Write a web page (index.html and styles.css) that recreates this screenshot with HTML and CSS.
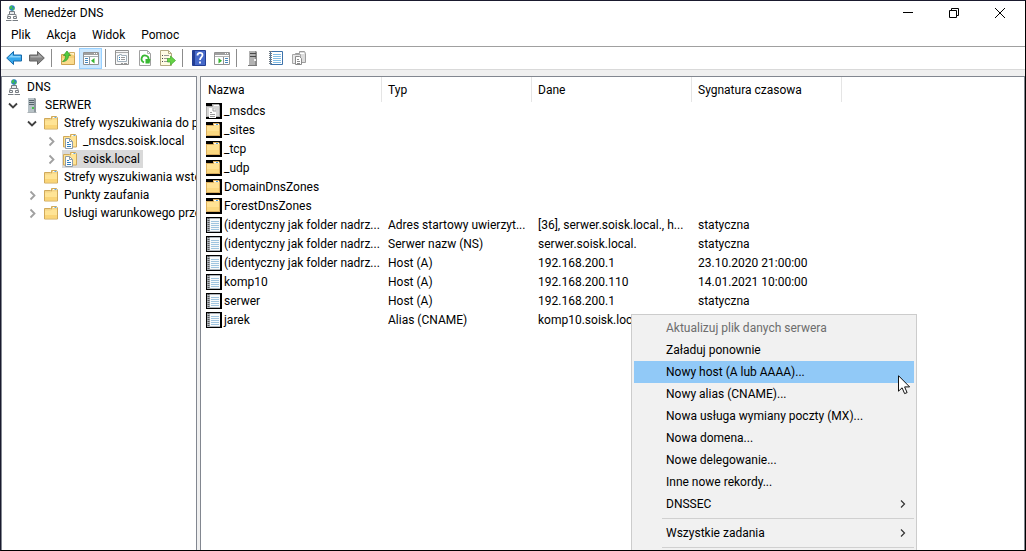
FILE: index.html
```
<!DOCTYPE html>
<html lang="pl">
<head>
  <meta charset="UTF-8">
  <meta name="viewport" content="width=device-width, initial-scale=1">
  <title>Menedżer DNS</title>
  <link rel="stylesheet" href="styles.css">
</head>
<body>

<!-- Ikony -->
<svg class="sprite" aria-hidden="true">
  <symbol id="i-dns" viewBox="0 0 16 16">
    <path d="M8 5v5M4 11v-1.500h8V11" fill="none" stroke="#8b8f94"/>
    <path d="M5.500 6.500h5v3h-5z" fill="#e8eaec" stroke="#777c82"/>
    <path d="M3.500 11.500h3v2h-3zM9.500 11.500h3v2h-3z" fill="#eef0f1" stroke="#777c82"/>
    <path d="M2 15.500h5.500M8.500 15.500H14" stroke="#777c82"/>
    <circle cx="8" cy="3" r="2.800" fill="#2d7fc4"/>
    <path d="M6 1.500l2-1 .5 2-1.500 2-1.500-1zM9 3l1.500-.5-.5 2.500-1.500.5z" fill="#3fc04b"/>
  </symbol>
  <symbol id="i-server" viewBox="0 0 16 16">
    <path d="M4 1h7l1 1v13H4z" fill="#8c969c"/>
    <path d="M4 1h6v14H4z" fill="#b7c1c6"/>
    <path d="M5 3.500h5M5 5.500h5M5 7.500h5" stroke="#56636b"/>
    <path d="M3.500 15.500h9" stroke="#aab1b5"/>
    <rect x="8" y="10" width="2" height="2" fill="#45c24c"/>
  </symbol>
  <symbol id="i-server-gray" viewBox="0 0 16 16">
    <path d="M4 1h7l1 1v13H4z" fill="#8a8a8a"/>
    <path d="M4 1h6v14H4z" fill="#b2b2b2"/>
    <path d="M5 3.500h6M5 6.500h6" stroke="#494949"/>
    <path d="M3 15.500h9" stroke="#777"/>
    <rect x="9" y="9" width="2" height="2" fill="#eee"/>
  </symbol>
  <symbol id="i-folder" viewBox="0 0 16 16">
    <path d="M8.500 4V1.500h5l1 1.500v11h-13V3.500h6z" fill="#f3d588" stroke="#d0a95a"/>
    <path d="M10 2.500h4" stroke="#fff"/>
    <path d="M11.500 2.500h2" stroke="#65a9dc"/>
    <path d="M2 5.500h6l1-1h5V13H2z" fill="#ffe495"/>
    <path d="M2 10h12v3.500H2z" fill="#fad578"/>
  </symbol>
  <symbol id="i-zone" viewBox="0 0 16 16">
    <path d="M8.500 4V1.500h5l1 1.500v11h-13V3.500h6z" fill="#ffe495" stroke="#d0a95a"/>
    <path d="M10 2.500h4" stroke="#fff"/>
    <path d="M11.500 2.500h2" stroke="#65a9dc"/>
    <path d="M3.500 5.500h4l3 3v7h-7z" fill="#fff" stroke="#8d9ba8"/>
    <path d="M7.500 5.500v3h3" fill="none" stroke="#8d9ba8"/>
    <path d="M5 9.500h2M5 11.500h4M5 13.500h4" stroke="#2f7fc0"/>
  </symbol>
  <symbol id="i-folder-dark" viewBox="0 0 16 16">
    <path d="M0 0h16v16H0z"/>
    <path d="M0 3h7V1h6l1 2v11H0z" fill="#d9ad5e"/>
    <path d="M1 4h7V2h5v11H1z" fill="#ffe294"/>
    <path d="M1 9h12v4H1z" fill="#fbd880"/>
    <path d="M8 2.500h5" stroke="#fff"/>
    <path d="M10 2.500h2" stroke="#4b9ddd"/>
  </symbol>
  <symbol id="i-delegation" viewBox="0 0 16 16">
    <path d="M0 0h16v16H0z"/>
    <path d="M0 3h6V1h7l1 2v11H0z" fill="#aaa"/>
    <path d="M1 4h6V2h6v11H1z" fill="#d5d5d5"/>
    <path d="M8 2.500h5" stroke="#fff"/>
    <path d="M3 5h4l3 3v7H3z" fill="#fff"/>
    <path d="M7 5v3h3M4 9.500h2M4 11.500h5M4 13.500h5" fill="none" stroke="#999"/>
  </symbol>
  <symbol id="i-record" viewBox="0 0 16 16">
    <path d="M0 0h16v16H0z"/>
    <path d="M1 1h13v14H1z" fill="#aeb5bc"/>
    <path d="M4 2h10v12H4z" fill="#f8fafb"/>
    <path d="M2.500 1v14" stroke="#555" stroke-dasharray="1 1" stroke-width="2"/>
    <path d="M5 4.500h8M5 6.500h8M5 8.500h8M5 10.500h8M5 12.500h8" stroke="#9fc4df"/>
  </symbol>
  <symbol id="i-back" viewBox="0 0 16 16">
    <path d="M.7 8L7.500 1.500V5h8v6h-8v3.500z" fill="#35a7ec" stroke="#1769aa"/>
    <path d="M2.500 7.500L6.500 3.700V6h8v1.500z" fill="#8ad3fa"/>
  </symbol>
  <symbol id="i-forward" viewBox="0 0 16 16">
    <path d="M15.300 8L8.500 1.500V5h-8v6h8v3.500z" fill="#858585" stroke="#626262"/>
    <path d="M13.500 7.500L9.500 3.700V6h-8v1.500z" fill="#adadad"/>
  </symbol>
  <symbol id="i-up" viewBox="0 0 16 16">
    <path d="M1.500 4.500h6l1-1h6v11h-13z" fill="#f5cf76" stroke="#cda252"/>
    <path d="M9.500 3.500V2.500h5v3" fill="#fff2c9" stroke="#d3ae64"/>
    <path d="M2 8h12v6H2z" fill="#fbdb8c"/>
    <path d="M2.500 11.500C5 10.500 5.500 8 5.500 5.500H3.500L7 1l3.500 4.500H8.500C8.500 9 6.500 11.500 2.500 11.500z" fill="#52cc3e" stroke="#30942b" stroke-width=".7"/>
  </symbol>
  <symbol id="i-tree" viewBox="0 0 16 16">
    <path d="M.5 2.500h15v12H.5z" fill="#fff" stroke="#929292"/>
    <path d="M1 3h14v2H1z" fill="#a0a0a0"/>
    <path d="M1 6.500h14" stroke="#a6adb3"/>
    <path d="M11 3.500h1M13 3.500h1" stroke="#fff"/>
    <path d="M6.500 7v7" stroke="#8d969e"/>
    <path d="M2 8.500h3M2 10.500h3M2 12.500h3" stroke="#4587bd"/>
    <path d="M11.500 8v5.500L8 10.700z" fill="#35b52e"/>
  </symbol>
  <symbol id="i-action" viewBox="0 0 16 16">
    <path d="M.5 2.500h15v12H.5z" fill="#fff" stroke="#929292"/>
    <path d="M1 3h14v2H1z" fill="#a0a0a0"/>
    <path d="M1 6.500h14" stroke="#b2b2b2"/>
    <path d="M11 3.500h1M13 3.500h1" stroke="#fff"/>
    <path d="M9.500 7v7" stroke="#929292"/>
    <path d="M11 8.500h3M11 10.500h3M11 12.500h3" stroke="#4587bd"/>
    <path d="M4.500 8v5.500L8 10.700z" fill="#35b52e"/>
  </symbol>
  <symbol id="i-props" viewBox="0 0 16 16">
    <path d="M1.500.5h13v14h-13z" fill="#f7f7f7" stroke="#919191"/>
    <path d="M2 2.500h12" stroke="#aaa"/>
    <path d="M3.500 5.500h2v-1h2v1h5v6h-9z" fill="#fff" stroke="#a2b0bb"/>
    <path d="M5 7.500h1M5 9.500h1" stroke="#287fc0"/>
    <path d="M7 7.500h4M7 9.500h4" stroke="#999"/>
    <path d="M7 13.500h2M10 13.500h3" stroke="#999"/>
  </symbol>
  <symbol id="i-refresh" viewBox="0 0 16 16">
    <path d="M2.500.5h8l3 3v12h-11z" fill="#fff" stroke="#a0a0a0"/>
    <path d="M10.500.5v3h3" fill="none" stroke="#b0b0b0"/>
    <path d="M7 12.300A3.500 3.500 0 1 1 11.500 9.500" fill="none" stroke="#39b832" stroke-width="1.800"/>
    <path d="M8.500 9h5l-1 4.500h-4z" fill="#39b832"/>
  </symbol>
  <symbol id="i-export" viewBox="0 0 16 16">
    <path d="M.5.5h8l3 3v12H.5z" fill="#fffbe3" stroke="#b5aa83"/>
    <path d="M8.500.5v3h3" fill="none" stroke="#b5aa83"/>
    <path d="M2 5.500h1M2 8.500h1M2 11.500h1" stroke="#444"/>
    <path d="M4 5.500h5M4 8.500h4M4 11.500h4" stroke="#999"/>
    <path d="M7.500 8.500h3V6L15.500 10.500 10.500 15v-3h-3z" fill="#66d345" stroke="#3ca82d" stroke-width=".7"/>
  </symbol>
  <symbol id="i-help" viewBox="0 0 16 16">
    <path d="M1.500.5h13v15h-13z" fill="#4669c9" stroke="#233e94"/>
    <path d="M2 1h2v14H2z" fill="#233e94"/>
    <path d="M6.500 5.500c0-3.500 5-3.500 5-.5 0 2-2.500 2.200-2.500 5M9 11.500v2" fill="none" stroke="#fff" stroke-width="1.800"/>
  </symbol>
  <symbol id="i-notebook" viewBox="0 0 16 16">
    <path d="M2.500 1.500h12v13h-12z" fill="#fff" stroke="#3c72ab"/>
    <path d="M5 4.500h8M5 6.500h8M5 8.500h8M5 10.500h8M5 12.500h8" stroke="#82bde5"/>
    <path d="M2.500 1v14" stroke="#707b84" stroke-width="3" stroke-dasharray="1 1"/>
  </symbol>
  <symbol id="i-filter" viewBox="0 0 16 16">
    <path d="M4.500 3.500h4v-2h5l1 2v9h-10z" fill="#ddd" stroke="#9d9d9d"/>
    <path d="M9 3.500h4" stroke="#fff"/>
    <path d="M1.500 4.500h8v9h-8z" fill="#e8e8e8" stroke="#a7a7a7"/>
    <path d="M4.500 6.500h4l2 2v6h-6z" fill="#fff" stroke="#8b8b8b"/>
    <path d="M6 9.500h2M6 11.500h3M6 13.500h3" stroke="#8b8b8b"/>
  </symbol>
  <symbol id="i-open" viewBox="0 0 16 16">
    <path d="M4 6.500l4 4 4-4" fill="none" stroke="#404040" stroke-width="1.800"/>
  </symbol>
  <symbol id="i-closed" viewBox="0 0 16 16">
    <path d="M6.500 4.500l4 4-4 4" fill="none" stroke="#a0a0a0" stroke-width="1.800"/>
  </symbol>
  <symbol id="i-more" viewBox="0 0 16 16">
    <path d="M6 4.500L9.500 8 6 11.500" fill="none" stroke="#333" stroke-width="1.200"/>
  </symbol>
</svg>

<div class="window">
  <header class="titlebar">
    <svg class="icon"><use href="#i-dns"/></svg>
    <h1>Menedżer DNS</h1>
    <div class="window-buttons">
      <button aria-label="Minimalizuj"><svg viewBox="0 0 10 10"><path d="M0 4.500h10"/></svg></button>
      <button aria-label="Przywróć"><svg viewBox="0 0 10 10"><path d="M.5 2.500h7v7h-7zM2.500 2.500v-2h7v7h-2"/></svg></button>
      <button aria-label="Zamknij"><svg viewBox="0 0 10 10"><path d="M0 0l10 10M10 0L0 10"/></svg></button>
    </div>
  </header>

  <nav class="menubar">
    <button>Plik</button>
    <button>Akcja</button>
    <button>Widok</button>
    <button>Pomoc</button>
  </nav>

  <div class="toolbar">
    <button aria-label="Wstecz"><svg class="icon"><use href="#i-back"/></svg></button>
    <button aria-label="Dalej"><svg class="icon"><use href="#i-forward"/></svg></button>
    <span class="divider"></span>
    <button aria-label="Do góry"><svg class="icon"><use href="#i-up"/></svg></button>
    <button class="active" aria-label="Drzewo konsoli"><svg class="icon"><use href="#i-tree"/></svg></button>
    <span class="divider"></span>
    <button aria-label="Właściwości"><svg class="icon"><use href="#i-props"/></svg></button>
    <button aria-label="Odśwież"><svg class="icon"><use href="#i-refresh"/></svg></button>
    <button aria-label="Eksportuj listę"><svg class="icon"><use href="#i-export"/></svg></button>
    <span class="divider"></span>
    <button aria-label="Pomoc"><svg class="icon"><use href="#i-help"/></svg></button>
    <button aria-label="Okienko akcji"><svg class="icon"><use href="#i-action"/></svg></button>
    <span class="divider"></span>
    <button aria-label="Nowy serwer"><svg class="icon"><use href="#i-server-gray"/></svg></button>
    <button aria-label="Nowy rekord"><svg class="icon"><use href="#i-notebook"/></svg></button>
    <button aria-label="Nowa strefa"><svg class="icon"><use href="#i-filter"/></svg></button>
  </div>

  <main class="panes">
    <!-- Drzewo konsoli -->
    <section class="tree">
      <div class="node root"><svg class="icon"><use href="#i-dns"/></svg><span class="label">DNS</span></div>
      <ul>
        <li>
          <div class="node">
            <button class="toggle" aria-label="Zwiń"><svg class="icon"><use href="#i-open"/></svg></button>
            <svg class="icon"><use href="#i-server"/></svg><span class="label">SERWER</span>
          </div>
          <ul>
            <li>
              <div class="node">
                <button class="toggle" aria-label="Zwiń"><svg class="icon"><use href="#i-open"/></svg></button>
                <svg class="icon"><use href="#i-folder"/></svg><span class="label">Strefy wyszukiwania do przodu</span>
              </div>
              <ul>
                <li class="node">
                  <button class="toggle" aria-label="Rozwiń"><svg class="icon"><use href="#i-closed"/></svg></button>
                  <svg class="icon"><use href="#i-zone"/></svg><span class="label">_msdcs.soisk.local</span>
                </li>
                <li class="node">
                  <button class="toggle" aria-label="Rozwiń"><svg class="icon"><use href="#i-closed"/></svg></button>
                  <span class="selected"><svg class="icon"><use href="#i-zone"/></svg><span class="label">soisk.local</span></span>
                </li>
              </ul>
            </li>
            <li class="node">
              <span class="toggle"></span>
              <svg class="icon"><use href="#i-folder"/></svg><span class="label">Strefy wyszukiwania wstecznego</span>
            </li>
            <li class="node">
              <button class="toggle" aria-label="Rozwiń"><svg class="icon"><use href="#i-closed"/></svg></button>
              <svg class="icon"><use href="#i-folder"/></svg><span class="label">Punkty zaufania</span>
            </li>
            <li class="node">
              <button class="toggle" aria-label="Rozwiń"><svg class="icon"><use href="#i-closed"/></svg></button>
              <svg class="icon"><use href="#i-folder"/></svg><span class="label">Usługi warunkowego przesyłania</span>
            </li>
          </ul>
        </li>
      </ul>
    </section>

    <!-- Lista rekordów -->
    <section class="records">
      <table>
        <colgroup>
          <col class="col-name"><col class="col-type"><col class="col-data"><col class="col-time"><col>
        </colgroup>
        <thead>
          <tr><th>Nazwa</th><th>Typ</th><th>Dane</th><th>Sygnatura czasowa</th><td></td></tr>
        </thead>
        <tbody>
          <tr><td><svg class="icon"><use href="#i-delegation"/></svg>_msdcs</td><td></td><td></td><td></td></tr>
          <tr><td><svg class="icon"><use href="#i-folder-dark"/></svg>_sites</td><td></td><td></td><td></td></tr>
          <tr><td><svg class="icon"><use href="#i-folder-dark"/></svg>_tcp</td><td></td><td></td><td></td></tr>
          <tr><td><svg class="icon"><use href="#i-folder-dark"/></svg>_udp</td><td></td><td></td><td></td></tr>
          <tr><td><svg class="icon"><use href="#i-folder-dark"/></svg>DomainDnsZones</td><td></td><td></td><td></td></tr>
          <tr><td><svg class="icon"><use href="#i-folder-dark"/></svg>ForestDnsZones</td><td></td><td></td><td></td></tr>
          <tr><td><svg class="icon"><use href="#i-record"/></svg>(identyczny jak folder nadrz...</td><td>Adres startowy uwierzyt...</td><td>[36], serwer.soisk.local., h...</td><td>statyczna</td></tr>
          <tr><td><svg class="icon"><use href="#i-record"/></svg>(identyczny jak folder nadrz...</td><td>Serwer nazw (NS)</td><td>serwer.soisk.local.</td><td>statyczna</td></tr>
          <tr><td><svg class="icon"><use href="#i-record"/></svg>(identyczny jak folder nadrz...</td><td>Host (A)</td><td>192.168.200.1</td><td>23.10.2020 21:00:00</td></tr>
          <tr><td><svg class="icon"><use href="#i-record"/></svg>komp10</td><td>Host (A)</td><td>192.168.200.110</td><td>14.01.2021 10:00:00</td></tr>
          <tr><td><svg class="icon"><use href="#i-record"/></svg>serwer</td><td>Host (A)</td><td>192.168.200.1</td><td>statyczna</td></tr>
          <tr><td><svg class="icon"><use href="#i-record"/></svg>jarek</td><td>Alias (CNAME)</td><td>komp10.soisk.local.</td><td></td></tr>
        </tbody>
      </table>
    </section>
  </main>

  <!-- Menu kontekstowe -->
  <div class="context-menu">
    <button disabled>Aktualizuj plik danych serwera</button>
    <button>Załaduj ponownie</button>
    <button class="hover">Nowy host (A lub AAAA)...</button>
    <button>Nowy alias (CNAME)...</button>
    <button>Nowa usługa wymiany poczty (MX)...</button>
    <button>Nowa domena...</button>
    <button>Nowe delegowanie...</button>
    <button>Inne nowe rekordy...</button>
    <button>DNSSEC<svg class="icon"><use href="#i-more"/></svg></button>
    <hr>
    <button>Wszystkie zadania<svg class="icon"><use href="#i-more"/></svg></button>
    <hr>
  </div>

  <svg class="cursor" viewBox="0 0 13 20" aria-hidden="true">
    <path d="M.5.7v15.500l3.600-3.400 2.500 5.800 2.500-1-2.500-5.700h5z" fill="#fff" stroke="#111"/>
  </svg>
</div>

</body>
</html>
```

FILE: styles.css
```
* {
  box-sizing: border-box;
}
body {
  margin: 0;
  font-family: Roboto, "Open Sans", sans-serif;
  font-size: 12px;
  color: #000;
  background: #fff;
}
button {
  font: inherit;
  color: inherit;
  background: none;
  border: none;
  padding: 0;
}
.sprite {
  display: none;
}
.icon {
  width: 16px;
  height: 16px;
  flex: none;
}
.window {
  position: relative;
  display: flex;
  flex-direction: column;
  height: 100vh;
  overflow: hidden;
  border: 1px solid #000;
  border-top-color: #1a1a2e;
  border-left-color: #1a1a2e;
}

/* Pasek tytułu i menu */
.titlebar {
  display: flex;
  align-items: center;
  height: 23px;
  padding-left: 3px;
}
.titlebar h1 {
  flex: 1;
  margin: 0 0 0 4px;
  font-size: 12px;
  font-weight: normal;
}
.window-buttons {
  display: flex;
  padding-right: 2px;
}
.window-buttons button {
  width: 46px;
  height: 22px;
}
.window-buttons svg {
  display: block;
  width: 10px;
  height: 10px;
  margin: auto;
  fill: none;
  stroke: #000;
}
.menubar {
  display: flex;
  height: 23px;
  border-bottom: 1px solid #a0a0a0;
  padding-left: 2px;
}
.menubar button {
  padding: 0 8px;
}
.toolbar {
  display: flex;
  align-items: center;
  height: 23px;
  padding-left: 1px;
  border-bottom: 1px solid #d9d9d9;
}
.toolbar button {
  display: flex;
  align-items: center;
  justify-content: center;
  width: 23px;
  height: 21px;
}
.toolbar .active {
  background: #cce8ff;
  border: 1px solid #99d1ff;
}
.divider {
  width: 1px;
  height: 18px;
  margin: 0 4px 0 3px;
  background: #8c8c8c;
}

/* Panele */
.panes {
  flex: 1;
  display: flex;
  gap: 3px;
  min-height: 0;
  padding-top: 6px;
  background: #f0f0f0;
}
.tree, .records {
  background: #fff;
  border: 1px solid #828790;
  border-bottom: none;
  overflow: hidden;
}
.tree {
  width: 196px;
  padding-top: 1px;
}
.records {
  flex: 1;
}
.tree ul {
  list-style: none;
  margin: 0;
  padding: 0;
}
.tree ul ul {
  padding-left: 19px;
}
.node {
  display: flex;
  align-items: center;
  height: 18px;
  padding-left: 3px;
  white-space: nowrap;
}
.root {
  padding-left: 4px;
}
.toggle {
  display: flex;
  width: 19px;
  height: 16px;
  flex: none;
}
.label {
  padding-left: 5px;
}
.selected {
  display: flex;
  align-items: center;
  height: 18px;
  padding-right: 3px;
  background: #d9d9d9;
}

table {
  width: 100%;
  table-layout: fixed;
  border-spacing: 0;
}
.col-name {
  width: 181px;
}
.col-type, .col-time {
  width: 150px;
}
.col-data {
  width: 160px;
}
thead tr {
  height: 25px;
}
th {
  padding: 0 0 0 6px;
  text-align: left;
  font-weight: normal;
  border-right: 1px solid #e5e5e5;
}
th:first-child {
  padding-left: 7px;
}
tbody tr {
  height: 19px;
}
tbody td {
  padding: 0 0 0 6px;
  line-height: 19px;
  white-space: nowrap;
}
tbody td:first-child {
  padding-left: 5px;
}
tbody .icon {
  display: inline-block;
  vertical-align: -4px;
  margin-right: 2px;
}

/* Menu kontekstowe */
.context-menu {
  position: absolute;
  left: 630px;
  top: 313px;
  width: 286px;
  padding: 2px;
  background: #f1f1f1;
  border: 1px solid #ccc;
}
.context-menu button {
  display: flex;
  align-items: center;
  justify-content: space-between;
  width: 100%;
  height: 22px;
  padding: 0 3px 1px 32px;
}
.context-menu .hover {
  background: #91c9f7;
}
.context-menu button:disabled {
  color: #6d6d6d;
}
.context-menu hr {
  height: 1px;
  margin: 3px 0 3px 28px;
  border: none;
  background: #d0d0d0;
}
.cursor {
  position: absolute;
  left: 897px;
  top: 374px;
  width: 13px;
  height: 20px;
}
```
